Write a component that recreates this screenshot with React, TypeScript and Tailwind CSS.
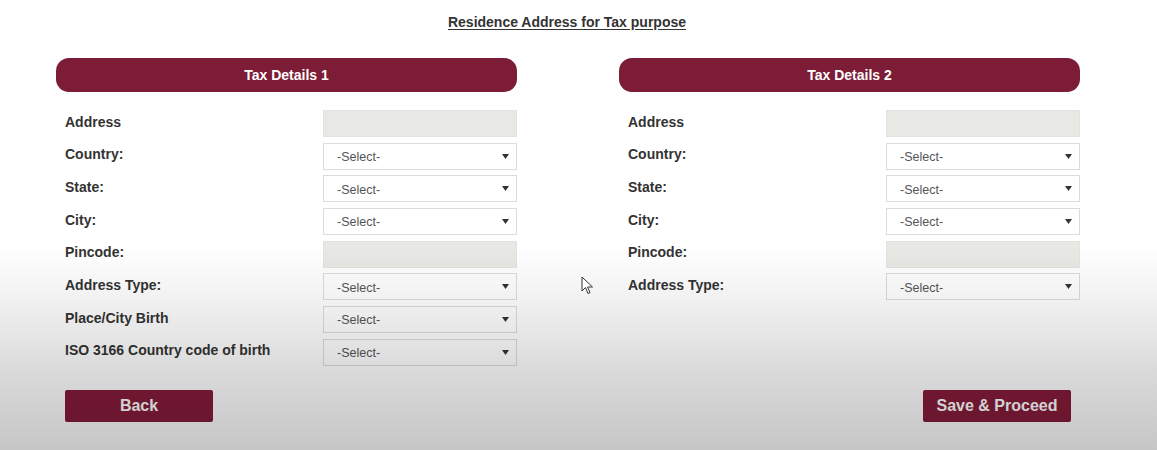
import React from "react";

const font = { fontFamily: '"Liberation Sans", Arial, sans-serif' };

type Row = { label: string; kind: "input" | "select" };

const leftRows: Row[] = [
  { label: "Address", kind: "input" },
  { label: "Country:", kind: "select" },
  { label: "State:", kind: "select" },
  { label: "City:", kind: "select" },
  { label: "Pincode:", kind: "input" },
  { label: "Address Type:", kind: "select" },
  { label: "Place/City Birth", kind: "select" },
  { label: "ISO 3166 Country code of birth", kind: "select" },
];

const rightRows: Row[] = leftRows.slice(0, 6);

function Field({ kind }: { kind: "input" | "select" }) {
  if (kind === "input") {
    return (
      <div className="h-[27px] w-[194px] bg-[#e8e8e4] border border-[#e2e2de]" />
    );
  }
  return (
    <div className="h-[27px] w-[194px] bg-white border border-[#dcdcdc] flex items-center justify-between pl-[13px] pr-[6px]">
      <span className="text-[12.5px] text-[#555] leading-none pt-[2px]">-Select-</span>
      <svg width="7" height="5" viewBox="0 0 7 5" className="mr-[1px]">
        <path d="M0 0 H7 L3.5 5 Z" fill="#333" />
      </svg>
    </div>
  );
}

function Column({ title, rows }: { title: string; rows: Row[] }) {
  return (
    <div className="w-[461px] flex flex-col">
      <div className="h-[34px] rounded-[13px] bg-[#7c1c36] flex items-center justify-center text-white text-[14px] font-bold">
        {title}
      </div>
      <div className="mt-[18px] flex flex-col gap-[5.7px]">
        {rows.map((r) => (
          <div key={r.label} className="flex items-center h-[27px]">
            <div className="w-[267px] pl-[9px] text-[14px] font-bold text-[#333] -mt-[3px]">
              {r.label}
            </div>
            <Field kind={r.kind} />
          </div>
        ))}
      </div>
    </div>
  );
}

export default function App() {
  return (
    <div
      style={font}
      className="relative w-[1157px] h-[450px] overflow-hidden bg-white"
    >
      <div className="pt-[12px] flex justify-center pr-[23px]">
        <span className="text-[14px] font-bold text-[#333] underline underline-offset-[2px]">
          Residence Address for Tax purpose
        </span>
      </div>
      <div className="mt-[25px] pl-[56px] flex gap-[102px]">
        <Column title="Tax Details 1" rows={leftRows} />
        <Column title="Tax Details 2" rows={rightRows} />
      </div>
      <div className="mt-[24px] pl-[65px] pr-[86px] flex justify-between">
        <button className="w-[148px] h-[32px] bg-[#861b3a] rounded-[2px] text-[16px] font-bold text-white">
          Back
        </button>
        <button className="w-[148px] h-[32px] bg-[#861b3a] rounded-[2px] text-[16px] font-bold text-white">
          Save &amp; Proceed
        </button>
      </div>
      <div className="pointer-events-none absolute inset-0 bg-[linear-gradient(to_bottom,rgba(0,0,0,0)_0px,rgba(0,0,0,0)_245px,rgba(0,0,0,0.055)_300px,rgba(0,0,0,0.145)_370px,rgba(0,0,0,0.225)_450px)]" />
      <svg
        className="absolute left-[581px] top-[276px]"
        width="14"
        height="20"
        viewBox="0 0 14 20"
      >
        <path
          d="M1 1 L1 15 L4.5 11.5 L7 17.5 L9 16.6 L6.6 11 L11.5 11 Z"
          fill="#fff"
          stroke="#333"
          strokeWidth="1"
          strokeLinejoin="round"
        />
      </svg>
    </div>
  );
}
